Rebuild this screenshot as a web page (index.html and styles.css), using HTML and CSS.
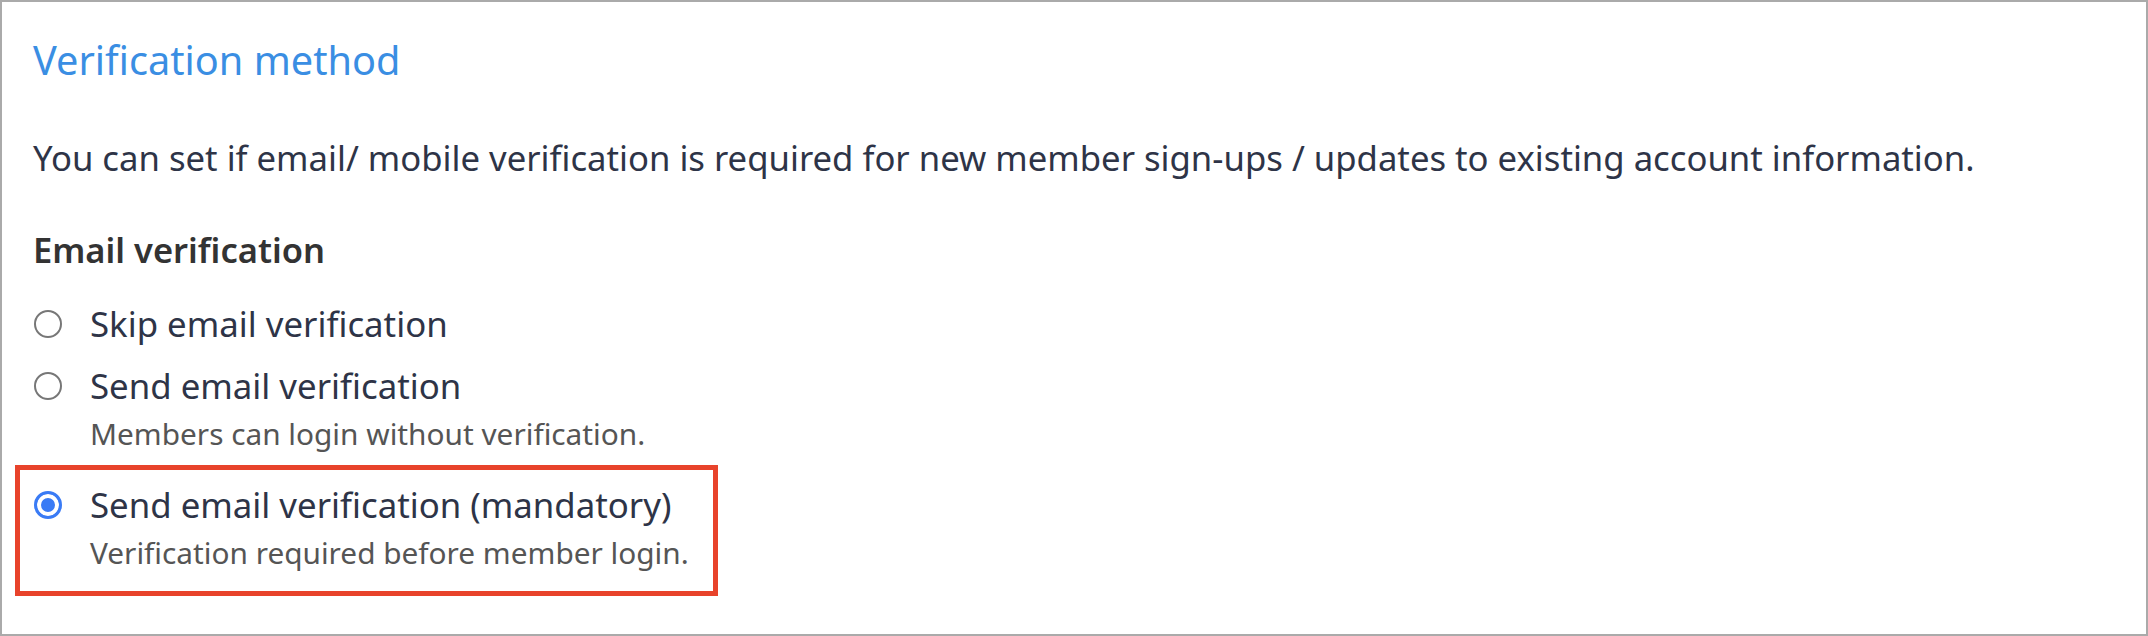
FILE: index.html
```html
<!DOCTYPE html>
<html lang="en">

<head>
  <meta charset="UTF-8">
  <meta name="viewport" content="width=device-width, initial-scale=1.0">
  <title>Verification method</title>
  <link rel="stylesheet" href="styles.css">
</head>

<body>
  <div class="panel">
    <div class="title">Verification method</div>
    <p class="intro">You can set if email/ mobile verification is required for new member sign-ups / updates to existing account information.</p>

    <div class="group-title">Email verification</div>

    <div class="options">
      <label class="option">
        <span class="radio"></span>
        <span class="option-text">
          <span class="option-label">Skip email verification</span>
        </span>
      </label>

      <label class="option">
        <span class="radio"></span>
        <span class="option-text">
          <span class="option-label">Send email verification</span>
          <span class="option-hint">Members can login without verification.</span>
        </span>
      </label>

      <div class="highlight">
        <label class="option">
          <span class="radio checked"></span>
          <span class="option-text">
            <span class="option-label">Send email verification (mandatory)</span>
            <span class="option-hint">Verification required before member login.</span>
          </span>
        </label>
      </div>
    </div>
  </div>
</body>

</html>
```

FILE: styles.css
```css
body {
  margin: 0;
  background: #fff;
  font-family: "Noto Sans", "Open Sans", sans-serif;
  color: #2e3447;
}

.panel {
  box-sizing: border-box;
  height: 636px;
  border: 2px solid #aaaaaa;
  padding: 30px 31px;
}

.title {
  font-size: 39.7px;
  line-height: 56px;
  color: #3a8ee3;
}

.intro {
  margin: 48px 0 0;
  font-size: 34.7px;
  line-height: 44px;
}

.group-title {
  margin-top: 48px;
  font-size: 34.5px;
  line-height: 44px;
  font-weight: 600;
  color: #333;
}

.options {
  display: flex;
  flex-direction: column;
  gap: 18px;
  margin-top: 30px;
}

.option {
  display: flex;
  align-items: flex-start;
  gap: 28px;
}

.radio {
  box-sizing: border-box;
  flex: none;
  width: 28px;
  height: 28px;
  margin-top: 8px;
  margin-left: 1px;
  border: 2px solid #777;
  border-radius: 50%;
  background: #fff;
}

.radio.checked {
  border: 3px solid #3a7bf5;
  background: #3a7bf5;
  box-shadow: inset 0 0 0 4px #fff;
}

.option-text {
  display: flex;
  flex-direction: column;
  gap: 6px;
}

.option-label {
  font-size: 34.8px;
  line-height: 44px;
}

.option-hint {
  font-size: 29.8px;
  line-height: 40px;
  color: #555;
}

.highlight {
  align-self: flex-start;
  width: 703px;
  box-sizing: border-box;
  margin: -7px 0 0 -18px;
  padding: 13px 0 18px 13px;
  border: 5px solid #e8432b;
}
```
